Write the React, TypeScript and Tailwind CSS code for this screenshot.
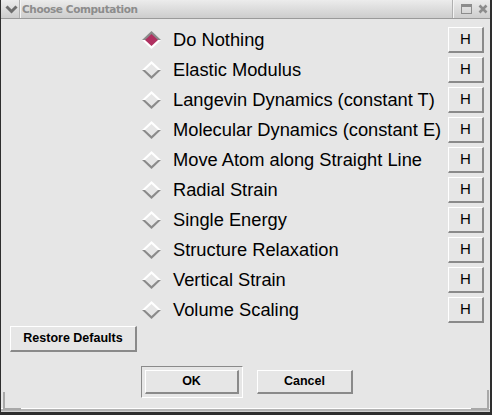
import React from "react";

const items = [
  "Do Nothing",
  "Elastic Modulus",
  "Langevin Dynamics (constant T)",
  "Molecular Dynamics (constant E)",
  "Move Atom along Straight Line",
  "Radial Strain",
  "Single Energy",
  "Structure Relaxation",
  "Vertical Strain",
  "Volume Scaling",
];

function Diamond({ selected }: { selected: boolean }) {
  const upper = selected ? "#8a8a8a" : "#ffffff";
  const lower = selected ? "#ffffff" : "#8a8a8a";
  const fill = selected ? "#b03060" : "#e6e6e6";
  return (
    <svg width="19" height="18" viewBox="0 0 19 18" className="shrink-0">
      <polygon points="0,9 9.5,0 19,9" fill={upper} />
      <polygon points="0,9 9.5,18 19,9" fill={lower} />
      <polygon points="3,9 9.5,3 16,9 9.5,15" fill={fill} />
    </svg>
  );
}

function Raised({
  className,
  children,
}: {
  className: string;
  children: React.ReactNode;
}) {
  return (
    <div
      className={
        "flex items-center justify-center bg-[#e6e6e6] border-t border-l border-t-white border-l-white border-b-2 border-r-2 border-b-[#8a8a8a] border-r-[#8a8a8a] " +
        className
      }
    >
      {children}
    </div>
  );
}

export default function App() {
  return (
    <div
      className="w-[492px] h-[415px] flex flex-col bg-[#e6e6e6] border-l border-r-2 border-l-[#2e2e2e] border-r-[#2e2e2e] relative"
      style={{ fontFamily: '"Liberation Sans", Arial, sans-serif' }}
    >
      {/* title bar */}
      <div className="h-[19px] shrink-0 flex items-center bg-gradient-to-b from-[#ececec] to-[#cdcdcd] border-b border-b-[#9a9a9a]">
        <div className="w-[18px] h-full flex items-center justify-center pl-[2px]">
          <svg width="13" height="9" viewBox="0 0 13 9">
            <polyline
              points="1.5,1.5 6.5,6.5 11.5,1.5"
              fill="none"
              stroke="#6e6e6e"
              strokeWidth="3"
            />
          </svg>
        </div>
        <div className="w-px h-full bg-[#b0b0b0]" />
        <div className="w-px h-full bg-[#f4f4f4]" />
        <div
          className="flex-1 pl-[1px] text-[10.5px] font-bold text-[#8c8c8c] tracking-[-0.4px] leading-none"
          style={{ fontFamily: '"DejaVu Sans", sans-serif' }}
        >
          Choose Computation
        </div>
        <div className="w-px h-full bg-[#b0b0b0]" />
        <div className="w-px h-full bg-[#f4f4f4]" />
        <div className="w-[24px] h-full flex items-center justify-center">
          <svg width="11" height="10" viewBox="0 0 11 10">
            <rect x="0.5" y="0.5" width="10" height="9" fill="none" stroke="#8c8c8c" strokeWidth="1" />
            <rect x="0" y="0" width="11" height="3" fill="#8c8c8c" />
          </svg>
        </div>
        <div className="w-[12px] h-full flex items-center justify-start">
          <svg width="10" height="10" viewBox="0 0 10 10">
            <path d="M1.5 1.5 L8.5 8.5 M8.5 1.5 L1.5 8.5" stroke="#8c8c8c" strokeWidth="2.6" />
          </svg>
        </div>
      </div>

      {/* body */}
      <div className="flex-1 flex flex-col">
        <div className="pt-[8px] pl-[141px] pr-[6px] flex flex-col gap-[4px]">
          {items.map((label, i) => (
            <div key={label} className="h-[26px] flex items-center">
              <Diamond selected={i === 0} />
              <span className="ml-[12px] flex-1 text-[18.3px] text-black leading-none whitespace-nowrap">
                {label}
              </span>
              <Raised className="w-[36px] h-[26px] text-[15px] text-black">H</Raised>
            </div>
          ))}
        </div>

        <div className="mt-[3px] ml-[9px]">
          <Raised className="w-[127px] h-[26px] text-[12.5px] font-bold text-black">
            Restore Defaults
          </Raised>
        </div>

        <div className="mt-[14px] ml-[140px] flex items-center gap-[14px]">
          <div className="w-[102px] h-[32px] flex items-center justify-center border border-t-[#8a8a8a] border-l-[#8a8a8a] border-b-white border-r-white">
            <Raised className="w-[94px] h-[24px] text-[12.5px] font-bold text-black">OK</Raised>
          </div>
          <Raised className="w-[96px] h-[24px] text-[12.5px] font-bold text-black">Cancel</Raised>
        </div>
      </div>

      {/* bottom frame */}
      <div className="h-[7px] shrink-0 flex flex-col">
        <div className="h-px bg-white" />
        <div className="h-[2px] bg-[#b4b4b4]" />
        <div className="h-px bg-[#d0d0d0]" />
        <div className="h-[3px] bg-[#2e2e2e]" />
      </div>

      {/* resize corner marks */}
      <div className="absolute left-[2px] bottom-[5px] w-[18px] h-[18px] border-l-2 border-b-2 border-l-[#a8a8a8] border-b-[#a8a8a8]" />
      <div className="absolute right-[1px] bottom-[5px] w-[18px] h-[20px] border-r-2 border-b-2 border-r-[#a8a8a8] border-b-[#a8a8a8]" />
    </div>
  );
}
